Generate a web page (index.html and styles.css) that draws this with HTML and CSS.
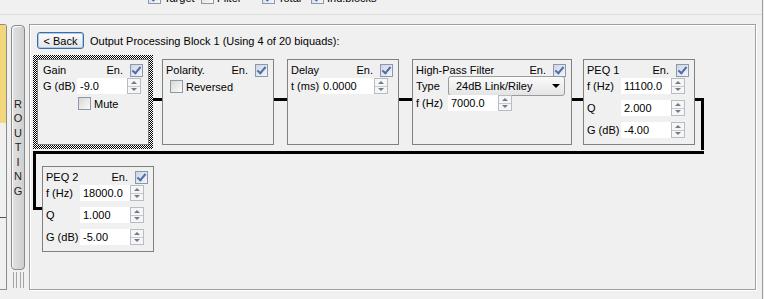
FILE: index.html
```html
<!DOCTYPE html>
<html lang="en">
  <head>
    <meta charset="UTF-8" />
    <title>Output Processing</title>
    <link rel="stylesheet" href="styles.css">
  </head>
  <body>
    <div class="main">
      <div class="topbar">
        <div class="legend">
          <label class="opt opt-target"><span class="check on"></span>Target</label>
          <label class="opt opt-filter"><span class="check"></span>Filter</label>
          <label class="opt opt-total"><span class="check on"></span>Total</label>
          <label class="opt"><span class="check on"></span>Ind.blocks</label>
        </div>
      </div>

      <div class="workspace">
        <div class="side">
          <div class="side-hi"></div>
          <div class="side-mid"></div>
        </div>

        <div class="routing">
          <div class="routing-bar">
            <span>R</span><span>O</span><span>U</span><span>T</span><span>I</span><span>N</span><span>G</span>
          </div>
          <div class="grip"></div>
        </div>

        <div class="panel">
          <div class="panel-head">
            <button class="btn-back">&lt; Back</button>
            <span>Output Processing Block 1 (Using 4 of 20 biquads):</span>
          </div>

          <div class="chain">
            <div class="focus">
              <div class="block gain">
                <div class="block-head"><span>Gain</span><span class="en">En.<span class="check on"></span></span></div>
                <div class="fields">
                  <div class="field"><span class="lbl">G (dB)</span><span class="num">-9.0</span><span class="spin"><i class="up"></i><i class="dn"></i></span></div>
                  <label class="opt mute"><span class="check"></span>Mute</label>
                </div>
              </div>
            </div>
            <div class="link link-9"></div>

            <div class="block">
              <div class="block-head"><span>Polarity.</span><span class="en">En.<span class="check on"></span></span></div>
              <div class="fields">
                <label class="opt reversed"><span class="check"></span>Reversed</label>
              </div>
            </div>
            <div class="link"></div>

            <div class="block delay">
              <div class="block-head"><span>Delay</span><span class="en">En.<span class="check on"></span></span></div>
              <div class="fields">
                <div class="field"><span class="lbl">t (ms)</span><span class="num">0.0000</span><span class="spin"><i class="up"></i><i class="dn"></i></span></div>
              </div>
            </div>
            <div class="link"></div>

            <div class="block hpf">
              <div class="block-head"><span>High-Pass Filter</span><span class="en">En.<span class="check on"></span></span></div>
              <div class="fields">
                <div class="field"><span class="lbl">Type</span><span class="combo">24dB Link/Riley</span></div>
                <div class="field"><span class="lbl">f (Hz)</span><span class="num">7000.0</span><span class="spin"><i class="up"></i><i class="dn"></i></span></div>
              </div>
            </div>
            <div class="link link-11"></div>

            <div class="block peq">
              <div class="block-head"><span>PEQ 1</span><span class="en">En.<span class="check on"></span></span></div>
              <div class="fields">
                <div class="field"><span class="lbl">f (Hz)</span><span class="num">11100.0</span><span class="spin"><i class="up"></i><i class="dn"></i></span></div>
                <div class="field"><span class="lbl">Q</span><span class="num">2.000</span><span class="spin"><i class="up"></i><i class="dn"></i></span></div>
                <div class="field"><span class="lbl">G (dB)</span><span class="num">-4.00</span><span class="spin"><i class="up"></i><i class="dn"></i></span></div>
              </div>
            </div>
            <div class="turn"></div>
          </div>

          <div class="return-line"></div>

          <div class="chain chain-2">
            <div class="turn-down"></div>
            <div class="block peq">
              <div class="block-head"><span>PEQ 2</span><span class="en">En.<span class="check on"></span></span></div>
              <div class="fields">
                <div class="field"><span class="lbl">f (Hz)</span><span class="num">18000.0</span><span class="spin"><i class="up"></i><i class="dn"></i></span></div>
                <div class="field"><span class="lbl">Q</span><span class="num">1.000</span><span class="spin"><i class="up"></i><i class="dn"></i></span></div>
                <div class="field"><span class="lbl">G (dB)</span><span class="num">-5.00</span><span class="spin"><i class="up"></i><i class="dn"></i></span></div>
              </div>
            </div>
          </div>
        </div>
      </div>
    </div>
    <div class="edge"></div>
  </body>
</html>
```

FILE: styles.css
```css
* {
  box-sizing: border-box;
}
body {
  margin: 0;
  width: 764px;
  height: 299px;
  overflow: hidden;
  display: flex;
  background: #f0f0f0;
  font-family: "Liberation Sans", Arial, sans-serif;
  font-size: 11px;
  color: #000;
}
.main {
  width: 762px;
}
.edge {
  width: 1px;
  background: #9c9c9c;
}

/* top legend, cut off by the window */
.topbar {
  height: 15px;
  overflow: hidden;
  border-bottom: 1px solid #dcdcdc;
}
.legend {
  display: flex;
  align-items: center;
  height: 13px;
  margin-top: -9px;
  padding-left: 148px;
}
.opt {
  display: flex;
  align-items: center;
  gap: 3px;
}
.opt-target {
  width: 53px;
}
.opt-filter {
  width: 61px;
}
.opt-total {
  width: 49px;
}

.check {
  position: relative;
  flex: none;
  width: 13px;
  height: 13px;
  border: 1px solid #8c98aa;
  background: linear-gradient(135deg, #d8d8d2, #fbfbfb);
}
.check.on {
  background: linear-gradient(135deg, #cdd4e4, #f4f6fa);
}
.check.on::after {
  content: "";
  position: absolute;
  left: 3px;
  top: 0;
  width: 3px;
  height: 7px;
  border: solid #4f6ea8;
  border-width: 0 2px 2px 0;
  transform: rotate(40deg);
}

.workspace {
  display: flex;
  height: 266px;
  margin-top: 9px;
}

/* left neighbour panel */
.side {
  width: 7px;
  border: 1px solid #8c8c8c;
  border-left: none;
  border-top-right-radius: 3px;
}
.side-hi {
  height: 98px;
  background: #f4d67c;
}
.side-mid {
  height: 95px;
  border-bottom: 1px solid #555;
}

/* routing handle */
.routing {
  display: flex;
  flex-direction: column;
  width: 14px;
  margin: 1px 4px 0 4px;
}
.routing-bar {
  display: flex;
  flex-direction: column;
  align-items: center;
  justify-content: center;
  height: 245px;
  border: 1px solid #8a8a8a;
  border-radius: 4px;
  background: linear-gradient(90deg, #e2e2e2, #cfcfcf);
  box-shadow: inset 1px 1px 0 #fbfbfb;
  line-height: 14.5px;
  color: #222;
}
.grip {
  height: 16px;
  margin: 2px 1px 0 2px;
  background: repeating-linear-gradient(90deg, #a4a4a4 0 1px, transparent 1px 3.4px);
}

/* main block panel */
.panel {
  width: 727px;
  padding: 7px 0 0 3px;
  border: 1px solid #a0a0a0;
  box-shadow: inset 1px 1px 0 #fff, 1px 1px 0 #fff;
}
.panel-head {
  display: flex;
  align-items: center;
  gap: 6px;
  margin-left: 4px;
}
.btn-back {
  width: 47px;
  height: 17px;
  padding: 0;
  border: 1px solid #3a6ea5;
  border-radius: 3px;
  background: linear-gradient(#fdfdfd, #e4e4e4);
  box-shadow: inset 0 0 0 1px #a9c9ee;
  font: inherit;
  color: #000;
}

.chain {
  display: flex;
  align-items: flex-start;
  margin-top: 6px;
}
.focus {
  padding: 4px;
  background: repeating-conic-gradient(#000 0% 25%, #fff 0% 50%) 0 0 / 2px 2px;
}
.block {
  width: 112px;
  height: 86px;
  padding: 3px 5px 3px 3px;
  border: 1px solid #808080;
  background: #f0f0f0;
}
.chain > .block {
  margin-top: 4px;
}
.block.gain {
  padding-left: 5px;
}
.block.hpf {
  width: 160px;
}
.block-head {
  display: flex;
  justify-content: space-between;
  align-items: center;
  height: 14px;
}
.en {
  display: flex;
  align-items: center;
  gap: 7px;
}
.fields {
  display: flex;
  flex-direction: column;
  gap: 6px;
  margin-top: 1px;
}
.hpf .fields {
  gap: 1px;
}
.field {
  display: flex;
  align-items: center;
  height: 16px;
}
.lbl {
  width: 34px;
}
.delay .lbl {
  width: 29px;
}
.hpf .lbl {
  width: 32px;
}
.num {
  width: 50px;
  height: 16px;
  line-height: 16px;
  padding-left: 3px;
  background: #fff;
}
.delay .num {
  width: 54px;
}
.spin {
  display: flex;
  flex-direction: column;
  width: 14px;
  height: 16px;
  border: 1px solid #b8bcc4;
  background: #f6f6f6;
}
.spin i {
  flex: 1;
  display: flex;
  align-items: center;
  justify-content: center;
}
.spin i + i {
  border-top: 1px solid #c4c8d0;
}
.spin .up::after,
.spin .dn::after {
  content: "";
  border-left: 3px solid transparent;
  border-right: 3px solid transparent;
}
.spin .up::after {
  border-bottom: 3px solid #707a88;
}
.spin .dn::after {
  border-top: 3px solid #707a88;
}
.combo {
  display: flex;
  align-items: center;
  justify-content: space-between;
  width: 117px;
  height: 20px;
  padding: 0 4px 0 7px;
  border: 1px solid #9a9a9a;
  border-radius: 3px;
  background: linear-gradient(#fbfbfb, #e4e4e4);
}
.combo::after {
  content: "";
  border-left: 4px solid transparent;
  border-right: 4px solid transparent;
  border-top: 4px solid #000;
}
.mute {
  margin: -3px 0 0 35px;
}
.reversed {
  margin: 2px 0 0 4px;
}

/* signal connectors */
.link {
  width: 13px;
  height: 3px;
  margin-top: 43px;
  background: #000;
}
.link-9 {
  width: 9px;
}
.link-11 {
  width: 11px;
}
.turn {
  width: 9px;
  height: 52px;
  margin-top: 43px;
  border-top: 3px solid #000;
  border-right: 3px solid #000;
}
.return-line {
  width: 671px;
  height: 3px;
  margin-top: 1px;
  background: #000;
}
.chain-2 {
  margin-top: 0;
}
.turn-down {
  width: 9px;
  height: 56px;
  border-left: 3px solid #000;
  border-bottom: 3px solid #000;
}
.chain-2 > .block {
  margin-top: 12px;
}
```
